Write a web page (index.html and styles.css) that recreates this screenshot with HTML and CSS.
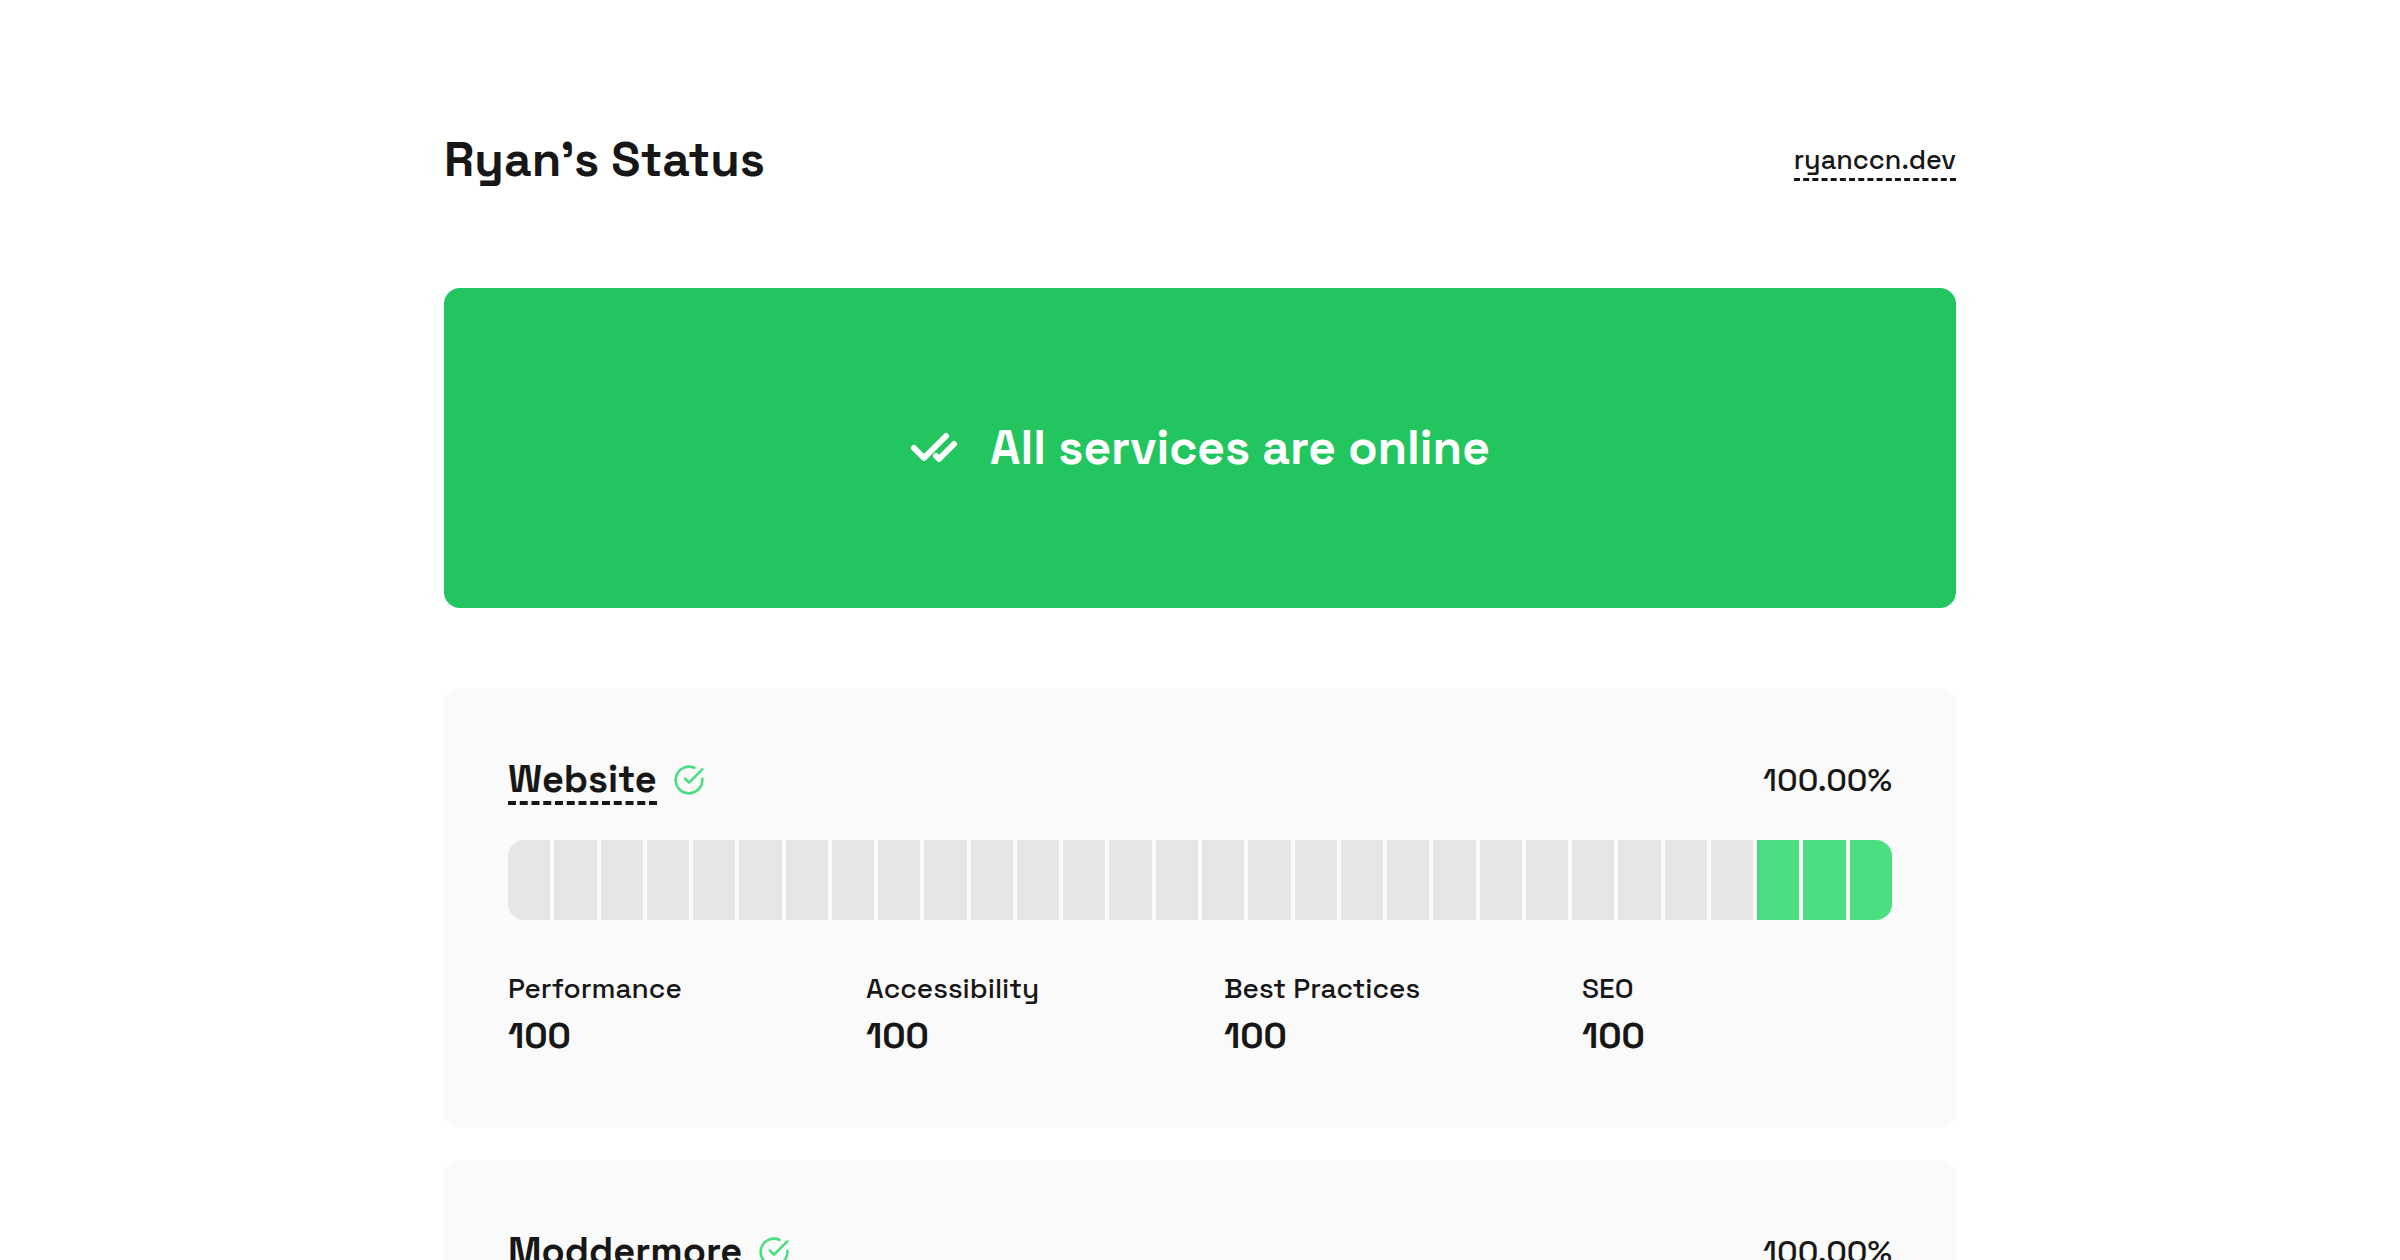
FILE: index.html
```html
<!DOCTYPE html>
<html lang="en">
<head>
<meta charset="utf-8">
<meta name="viewport" content="width=device-width, initial-scale=1">
<title>Ryan’s Status</title>
<link rel="stylesheet" href="styles.css">
</head>
<body>
<main class="page">
  <header class="header">
    <h1 class="title">Ryan’s Status</h1>
    <a class="home-link" href="#">ryanccn.dev</a>
  </header>

  <section class="banner">
    <svg class="banner-icon" viewBox="0 0 24 24" aria-hidden="true"><path d="M18 6 7 17l-5-5"/><path d="m22 10-7.5 7.5L13 16"/></svg>
    <p class="banner-text">All services are online</p>
  </section>

  <div class="services">
    <section class="card">
      <div class="card-head">
        <h2 class="service"><a class="service-link" href="#">Website</a>
          <svg class="service-icon" viewBox="0 0 24 24" aria-label="Online"><path d="M22 11.08V12a10 10 0 1 1-5.93-9.14"/><path d="M22 4 12 14.01l-3-3"/></svg>
        </h2>
        <span class="uptime">100.00%</span>
      </div>
      <div class="history">
        <i></i><i></i><i></i><i></i><i></i><i></i><i></i><i></i><i></i>
        <i></i><i></i><i></i><i></i><i></i><i></i><i></i><i></i><i></i>
        <i></i><i></i><i></i><i></i><i></i><i></i><i></i><i></i><i></i>
        <i class="up"></i><i class="up"></i><i class="up"></i>
      </div>
      <dl class="stats">
        <div><dt>Performance</dt><dd>100</dd></div>
        <div><dt>Accessibility</dt><dd>100</dd></div>
        <div><dt>Best Practices</dt><dd>100</dd></div>
        <div><dt>SEO</dt><dd>100</dd></div>
      </dl>
    </section>

    <section class="card">
      <div class="card-head">
        <h2 class="service"><a class="service-link" href="#">Moddermore</a>
          <svg class="service-icon" viewBox="0 0 24 24" aria-label="Online"><path d="M22 11.08V12a10 10 0 1 1-5.93-9.14"/><path d="M22 4 12 14.01l-3-3"/></svg>
        </h2>
        <span class="uptime">100.00%</span>
      </div>
    </section>
  </div>
</main>
</body>
</html>
```
FILE: styles.css
```css
*,
*::before,
*::after {
  box-sizing: border-box;
  margin: 0;
  padding: 0;
}

html {
  scrollbar-width: none;
}

body {
  background: #fff;
  color: #171717;
  font-family: "Space Grotesk", Inter, sans-serif;
  font-size: 28px;
  font-weight: 500;
  line-height: 40px;
}

a {
  color: inherit;
  text-decoration: none;
}

svg {
  flex: none;
  fill: none;
  stroke: currentColor;
  stroke-linecap: round;
  stroke-linejoin: round;
}

.page {
  max-width: 1512px;
  margin: 0 auto;
  padding: 128px 0;
}

.header {
  display: flex;
  align-items: center;
  justify-content: space-between;
  margin-bottom: 96px;
}

.title {
  font-size: 48px;
  font-weight: 700;
  line-height: 64px;
}

.home-link {
  padding-top: 3px;
  border-bottom: 3px dashed currentColor;
  font-size: 27px;
  line-height: 36px;
}

.banner {
  display: flex;
  align-items: center;
  justify-content: center;
  gap: 32px;
  margin-bottom: 80px;
  padding: 128px 32px;
  border-radius: 16px;
  background: #22c55e;
  color: #fff;
}

.banner-icon {
  width: 48px;
  height: 48px;
  stroke-width: 3;
}

.banner-text {
  font-size: 48px;
  font-weight: 700;
  line-height: 64px;
}

.services {
  display: grid;
  gap: 32px;
}

.card {
  padding: 64px;
  border-radius: 16px;
  background: #fafafa;
}

.card-head {
  display: flex;
  align-items: center;
  justify-content: space-between;
}

.service {
  display: flex;
  align-items: center;
  gap: 16px;
  font-size: 38px;
  font-weight: 700;
}

.service-link {
  padding-top: 2px;
  border-bottom: 4px dashed currentColor;
  line-height: 44px;
}

.service-icon {
  width: 32px;
  height: 32px;
  color: #4ade80;
  stroke-width: 2;
}

.uptime {
  font-size: 32px;
  font-weight: 500;
  line-height: 56px;
}

.history {
  display: flex;
  gap: 4px;
  height: 80px;
  margin-top: 32px;
  overflow: hidden;
  border-radius: 16px;
}

.history i {
  flex: 1;
  background: #e5e5e5;
}

.history .up {
  background: #4ade80;
}

.stats {
  display: grid;
  grid-template-columns: repeat(4, 1fr);
  gap: 48px;
  margin-top: 48px;
}

.stats dd {
  font-size: 36px;
  font-weight: 700;
  line-height: 56px;
}
```
